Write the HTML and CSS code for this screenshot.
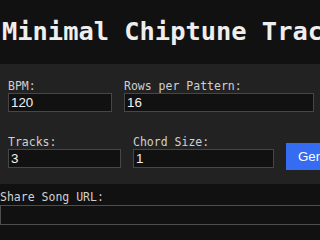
FILE: index.html
```html
<!DOCTYPE html>
<html>
<head>
<meta charset="utf-8">
<link rel="stylesheet" href="styles.css">
</head>
<body>
<h1 class="title">Minimal Chiptune Tracker</h1>
<div class="panel">
  <div class="row">
    <div class="field f-bpm">
      <label class="lbl">BPM:</label>
      <input class="inp" type="text" value="120">
    </div>
    <div class="field f-rows">
      <label class="lbl">Rows per Pattern:</label>
      <input class="inp" type="text" value="16">
    </div>
  </div>
  <div class="row row2">
    <div class="field f-tracks">
      <label class="lbl">Tracks:</label>
      <input class="inp" type="text" value="3">
    </div>
    <div class="field f-chord">
      <label class="lbl">Chord Size:</label>
      <input class="inp" type="text" value="1">
    </div>
    <button class="btn">Generate Song</button>
  </div>
</div>
<div class="share">
  <label class="lbl">Share Song URL:</label>
  <input class="inp share-inp" type="text" value="">
</div>
</body>
</html>
```
FILE: styles.css
```css
html, body {
  margin: 0;
  padding: 0;
  background: #111111;
  width: 320px;
  height: 240px;
  overflow: hidden;
  font-family: "DejaVu Sans Mono", monospace;
  color: #d8d8d8;
}
.title {
  margin: 0;
  padding: 15px 0 17px 2px;
  font-size: 25.4px;
  line-height: 32px;
  font-weight: bold;
  color: #eeeeee;
  white-space: nowrap;
}
.panel {
  background: #222222;
  padding: 16px 8px 14px 8px;
  width: 500px;
}
.row {
  display: flex;
  gap: 12px;
  align-items: flex-start;
}
.row2 {
  margin-top: 24px;
  gap: 0;
}
.field {
  display: flex;
  flex-direction: column;
}
.lbl {
  display: block;
  font-size: 11.5px;
  line-height: 13px;
  color: #d0d0d0;
  white-space: nowrap;
}
.inp {
  box-sizing: border-box;
  height: 19px;
  margin: 0;
  padding: 0 2px;
  border: 1px solid #474747;
  background: #111111;
  color: #f2f2f2;
  font-family: "Liberation Sans", Arial, sans-serif;
  font-size: 13.33px;
  outline: none;
}
.f-bpm .inp { width: 104px; }
.f-rows .inp { width: 190px; }
.f-tracks .inp { width: 113px; }
.f-chord { margin-left: 12px; }
.f-chord .inp { width: 141px; }
.btn {
  margin: 7px 0 0 12px;
  height: 27px;
  padding: 0 12px;
  border: none;
  border-radius: 0;
  background: #356cf2;
  color: #ffffff;
  font-family: "Liberation Sans", Arial, sans-serif;
  font-size: 13.33px;
  white-space: nowrap;
}
.share {
  margin-top: 7px;
}
.share-inp {
  width: 340px;
  height: 20px;
  border-color: #4d4d4d;
}
```
